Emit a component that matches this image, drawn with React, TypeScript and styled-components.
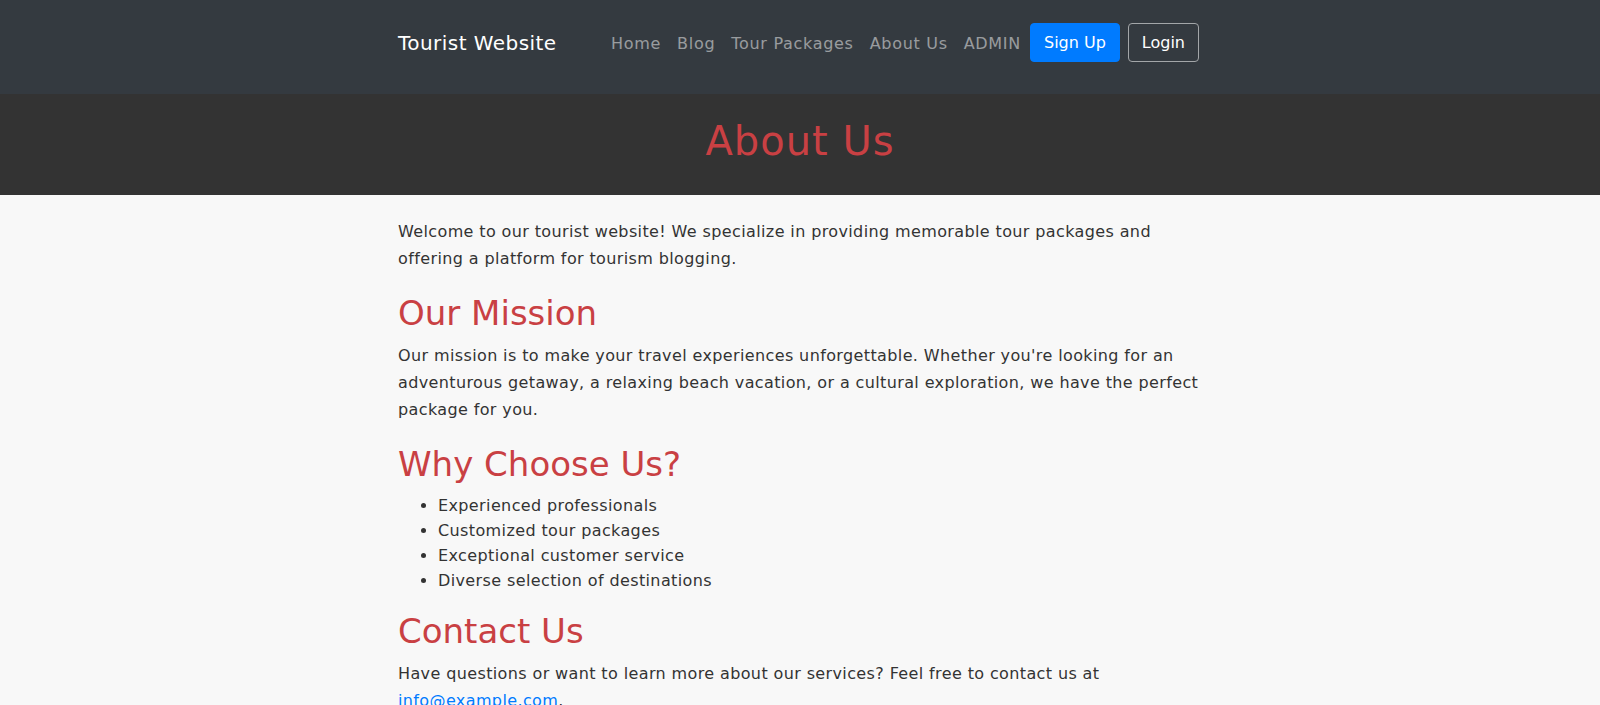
import React from "react";
import styled, { createGlobalStyle } from "styled-components";

const GlobalStyle = createGlobalStyle`
  html, body {
    margin: 0;
    padding: 0;
  }
  body {
    background: #f8f8f8;
    font-family: "DejaVu Sans", "Liberation Sans", sans-serif;
    color: #333333;
  }
  * { box-sizing: border-box; }
`;

const Navbar = styled.nav`
  background: #343a40;
  padding: 23px 0 32px;
`;

const Container = styled.div`
  max-width: 804px;
  margin: 0 auto;
`;

const NavRow = styled(Container)`
  display: flex;
  align-items: center;
  height: 39px;
  padding-right: 3px;
`;

const Brand = styled.a`
  color: #ffffff;
  font-size: 20px;
  line-height: 30px;
  letter-spacing: 0.45px;
  text-decoration: none;
`;

const NavList = styled.ul`
  display: flex;
  align-items: center;
  list-style: none;
  margin: 0 0 0 auto;
  padding: 0;
`;

const NavLink = styled.a`
  display: block;
  color: rgba(255, 255, 255, 0.5);
  font-size: 16px;
  line-height: 24px;
  letter-spacing: 0.7px;
  padding: 3px 8px 0;
  text-decoration: none;
`;

const Button = styled.button<{ $variant: "primary" | "outline" }>`
  font-family: inherit;
  font-size: 16px;
  line-height: 24px;
  padding: 7px 13px 6px;
  border-radius: 4px;
  margin-left: ${(p) => (p.$variant === "primary" ? "1px" : "8px")};
  color: #ffffff;
  background: ${(p) => (p.$variant === "primary" ? "#007bff" : "transparent")};
  border: 1px solid ${(p) => (p.$variant === "primary" ? "#007bff" : "#a3a6a9")};
  cursor: pointer;
`;

const Hero = styled.header`
  background: #333333;
  padding: 23px 0 30px;
`;

const HeroTitle = styled.h1`
  margin: 0;
  text-align: center;
  color: #c94043;
  font-size: 40px;
  line-height: 48px;
  font-weight: normal;
  letter-spacing: 1px;
`;

const Main = styled(Container)`
  padding-top: 23px;
`;

const Paragraph = styled.p`
  margin: 0 0 16px;
  font-size: 16px;
  line-height: 27px;
  letter-spacing: 0.38px;
  color: #333333;
`;

const Heading = styled.h2`
  margin: 0 0 9px;
  padding-top: 5px;
  font-size: 34px;
  line-height: 40px;
  font-weight: normal;
  color: #c94043;
`;

const List = styled.ul`
  margin: 0 0 13px;
  padding-left: 40px;
`;

const Item = styled.li`
  font-size: 16px;
  line-height: 25px;
  letter-spacing: 0.38px;
  color: #333333;
`;

const Link = styled.a`
  color: #007bff;
  text-decoration: none;
`;

const navItems = ["Home", "Blog", "Tour Packages", "About Us", "ADMIN"];
const reasons = [
  "Experienced professionals",
  "Customized tour packages",
  "Exceptional customer service",
  "Diverse selection of destinations",
];

export default function App() {
  return (
    <>
      <GlobalStyle />
      <Navbar>
        <NavRow>
          <Brand href="#">Tourist Website</Brand>
          <NavList>
            {navItems.map((item) => (
              <li key={item}>
                <NavLink href="#">{item}</NavLink>
              </li>
            ))}
            <li>
              <Button $variant="primary">Sign Up</Button>
            </li>
            <li>
              <Button $variant="outline">Login</Button>
            </li>
          </NavList>
        </NavRow>
      </Navbar>
      <Hero>
        <HeroTitle>About Us</HeroTitle>
      </Hero>
      <Main>
        <Paragraph>
          Welcome to our tourist website! We specialize in providing memorable tour packages and
          offering a platform for tourism blogging.
        </Paragraph>
        <Heading>Our Mission</Heading>
        <Paragraph>
          Our mission is to make your travel experiences unforgettable. Whether you're looking for an
          adventurous getaway, a relaxing beach vacation, or a cultural exploration, we have the perfect
          package for you.
        </Paragraph>
        <Heading>Why Choose Us?</Heading>
        <List>
          {reasons.map((r) => (
            <Item key={r}>{r}</Item>
          ))}
        </List>
        <Heading>Contact Us</Heading>
        <Paragraph>
          Have questions or want to learn more about our services? Feel free to contact us at{" "}
          <Link href="mailto:info@example.com">info@example.com</Link>.
        </Paragraph>
      </Main>
    </>
  );
}
